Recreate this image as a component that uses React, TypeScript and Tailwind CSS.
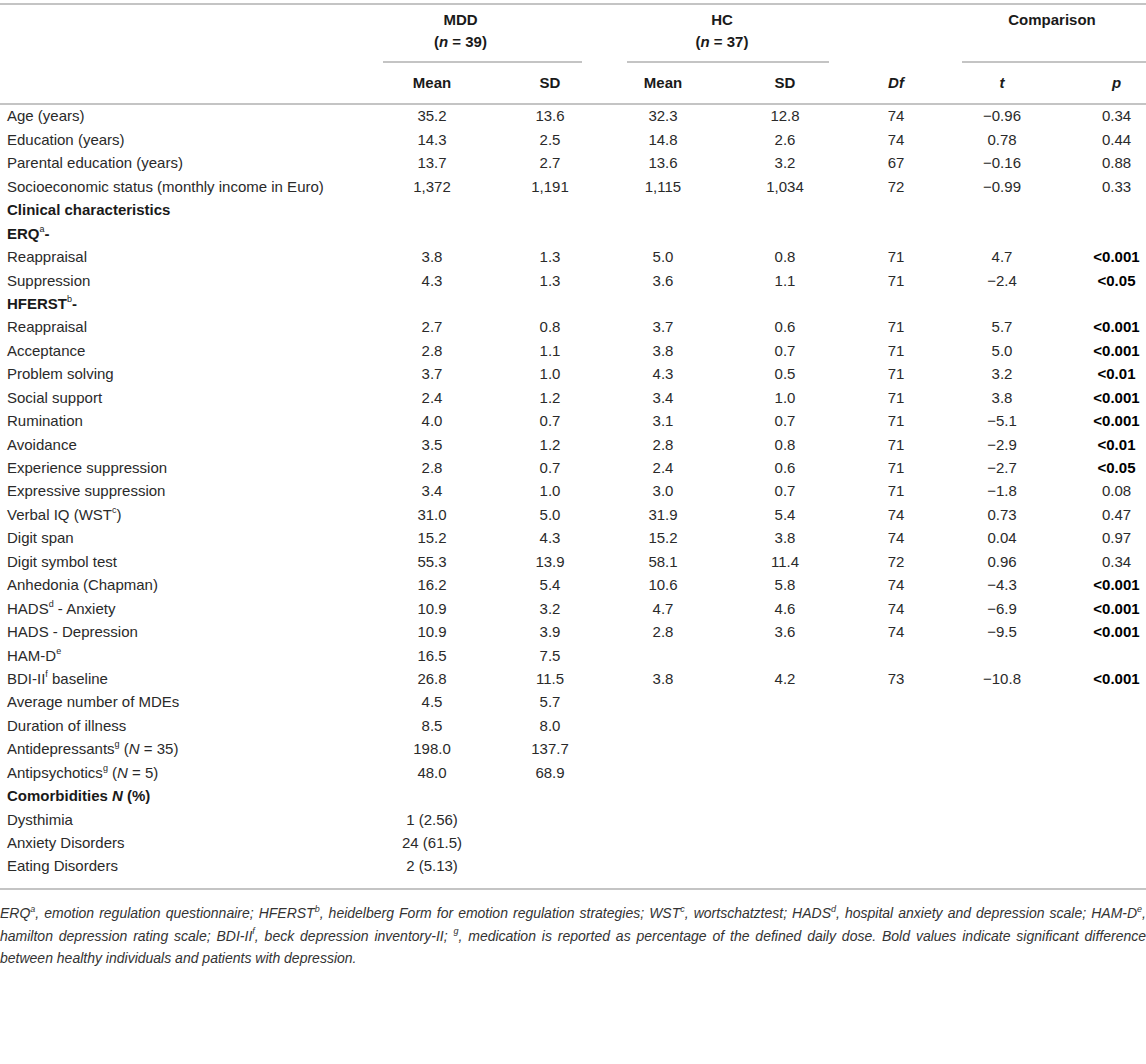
import type { ReactNode } from "react";

const cols =
  "grid grid-cols-[373px_118px_118px_108px_136px_86px_126px_81px]";

type Row = {
  label: ReactNode;
  v?: (string | undefined)[];
  bold?: boolean;
  sig?: boolean;
};

const Sup = ({ children }: { children: ReactNode }) => (
  <sup className="relative -top-[1px] align-super text-[9px] font-normal leading-none">
    {children}
  </sup>
);

const rows: Row[] = [
  { label: "Age (years)", v: ["35.2", "13.6", "32.3", "12.8", "74", "−0.96", "0.34"] },
  { label: "Education (years)", v: ["14.3", "2.5", "14.8", "2.6", "74", "0.78", "0.44"] },
  { label: "Parental education (years)", v: ["13.7", "2.7", "13.6", "3.2", "67", "−0.16", "0.88"] },
  {
    label: "Socioeconomic status (monthly income in Euro)",
    v: ["1,372", "1,191", "1,115", "1,034", "72", "−0.99", "0.33"],
  },
  { label: "Clinical characteristics", bold: true },
  {
    label: (
      <>
        ERQ<Sup>a</Sup>-
      </>
    ),
    bold: true,
  },
  { label: "Reappraisal", v: ["3.8", "1.3", "5.0", "0.8", "71", "4.7", "<0.001"], sig: true },
  { label: "Suppression", v: ["4.3", "1.3", "3.6", "1.1", "71", "−2.4", "<0.05"], sig: true },
  {
    label: (
      <>
        HFERST<Sup>b</Sup>-
      </>
    ),
    bold: true,
  },
  { label: "Reappraisal", v: ["2.7", "0.8", "3.7", "0.6", "71", "5.7", "<0.001"], sig: true },
  { label: "Acceptance", v: ["2.8", "1.1", "3.8", "0.7", "71", "5.0", "<0.001"], sig: true },
  { label: "Problem solving", v: ["3.7", "1.0", "4.3", "0.5", "71", "3.2", "<0.01"], sig: true },
  { label: "Social support", v: ["2.4", "1.2", "3.4", "1.0", "71", "3.8", "<0.001"], sig: true },
  { label: "Rumination", v: ["4.0", "0.7", "3.1", "0.7", "71", "−5.1", "<0.001"], sig: true },
  { label: "Avoidance", v: ["3.5", "1.2", "2.8", "0.8", "71", "−2.9", "<0.01"], sig: true },
  { label: "Experience suppression", v: ["2.8", "0.7", "2.4", "0.6", "71", "−2.7", "<0.05"], sig: true },
  { label: "Expressive suppression", v: ["3.4", "1.0", "3.0", "0.7", "71", "−1.8", "0.08"] },
  {
    label: (
      <>
        Verbal IQ (WST<Sup>c</Sup>)
      </>
    ),
    v: ["31.0", "5.0", "31.9", "5.4", "74", "0.73", "0.47"],
  },
  { label: "Digit span", v: ["15.2", "4.3", "15.2", "3.8", "74", "0.04", "0.97"] },
  { label: "Digit symbol test", v: ["55.3", "13.9", "58.1", "11.4", "72", "0.96", "0.34"] },
  { label: "Anhedonia (Chapman)", v: ["16.2", "5.4", "10.6", "5.8", "74", "−4.3", "<0.001"], sig: true },
  {
    label: (
      <>
        HADS<Sup>d</Sup> - Anxiety
      </>
    ),
    v: ["10.9", "3.2", "4.7", "4.6", "74", "−6.9", "<0.001"],
    sig: true,
  },
  { label: "HADS - Depression", v: ["10.9", "3.9", "2.8", "3.6", "74", "−9.5", "<0.001"], sig: true },
  {
    label: (
      <>
        HAM-D<Sup>e</Sup>
      </>
    ),
    v: ["16.5", "7.5"],
  },
  {
    label: (
      <>
        BDI-II<Sup>f</Sup> baseline
      </>
    ),
    v: ["26.8", "11.5", "3.8", "4.2", "73", "−10.8", "<0.001"],
    sig: true,
  },
  { label: "Average number of MDEs", v: ["4.5", "5.7"] },
  { label: "Duration of illness", v: ["8.5", "8.0"] },
  {
    label: (
      <>
        Antidepressants<Sup>g</Sup> (<i>N</i> = 35)
      </>
    ),
    v: ["198.0", "137.7"],
  },
  {
    label: (
      <>
        Antipsychotics<Sup>g</Sup> (<i>N</i> = 5)
      </>
    ),
    v: ["48.0", "68.9"],
  },
  {
    label: (
      <>
        Comorbidities <i>N</i> (%)
      </>
    ),
    bold: true,
  },
  { label: "Dysthimia", v: ["1 (2.56)"] },
  { label: "Anxiety Disorders", v: ["24 (61.5)"] },
  { label: "Eating Disorders", v: ["2 (5.13)"] },
];

function Line() {
  return <div className="h-[2px] bg-[#c4c4c4]" />;
}

export default function App() {
  return (
    <div className="w-[1146px] bg-white pt-[3px] font-['Liberation_Sans',Arial,sans-serif] text-[15px] text-[#2a2a2a]">
      <Line />

      {/* group headers */}
      <div className={`${cols} h-[58px] font-bold text-[#1a1a1a]`}>
        <div />
        <div className="col-span-2 ml-[10px] mr-[27px] flex flex-col border-b-2 border-[#c4c4c4] pt-[4px] pr-[44px] text-center leading-[22px]">
          <span>MDD</span>
          <span>
            (<i>n</i> = 39)
          </span>
        </div>
        <div className="col-span-2 ml-[18px] mr-[24px] flex flex-col border-b-2 border-[#c4c4c4] pt-[4px] pr-[12px] text-center leading-[22px]">
          <span>HC</span>
          <span>
            (<i>n</i> = 37)
          </span>
        </div>
        <div />
        <div className="col-span-2 ml-[23px] flex flex-col border-b-2 border-[#c4c4c4] pt-[4px] pr-[4px] text-center leading-[22px]">
          <span>Comparison</span>
        </div>
      </div>

      {/* sub headers */}
      <div className={`${cols} h-[40px] items-center text-center font-bold text-[#1a1a1a]`}>
        <div />
        <div>Mean</div>
        <div>SD</div>
        <div>Mean</div>
        <div>SD</div>
        <div className="italic">Df</div>
        <div className="italic">t</div>
        <div className="pl-[22px] italic">p</div>
      </div>
      <Line />

      <div className="pb-[10px]">
        {rows.map((r, i) => (
          <div key={i} className={`${cols} h-[23.44px] items-center`}>
            <div className={`pl-[7px] whitespace-nowrap ${r.bold ? "font-bold text-[#1a1a1a]" : ""}`}>
              {r.label}
            </div>
            {[0, 1, 2, 3, 4, 5].map((c) => (
              <div key={c} className="whitespace-nowrap text-center">
                {r.v?.[c] ?? ""}
              </div>
            ))}
            <div
              className={`pl-[22px] text-center whitespace-nowrap ${
                r.sig ? "font-bold text-black" : ""
              }`}
            >
              {r.v?.[6] ?? ""}
            </div>
          </div>
        ))}
      </div>
      <Line />

      <div className="pt-[12px] text-[14px] leading-[22.5px] italic text-[#333]">
        <p className="whitespace-nowrap text-justify [text-align-last:justify]">
          ERQ<Sup>a</Sup>, emotion regulation questionnaire; HFERST<Sup>b</Sup>,
          heidelberg Form for emotion regulation strategies; WST<Sup>c</Sup>,
          wortschatztest; HADS<Sup>d</Sup>, hospital anxiety and depression
          scale; HAM-D<Sup>e</Sup>,
        </p>
        <p className="whitespace-nowrap text-justify [text-align-last:justify]">
          hamilton depression rating scale; BDI-II<Sup>f</Sup>, beck depression
          inventory-II; <Sup>g</Sup>, medication is reported as percentage of
          the defined daily dose. Bold values indicate significant difference
        </p>
        <p>between healthy individuals and patients with depression.</p>
      </div>
    </div>
  );
}
